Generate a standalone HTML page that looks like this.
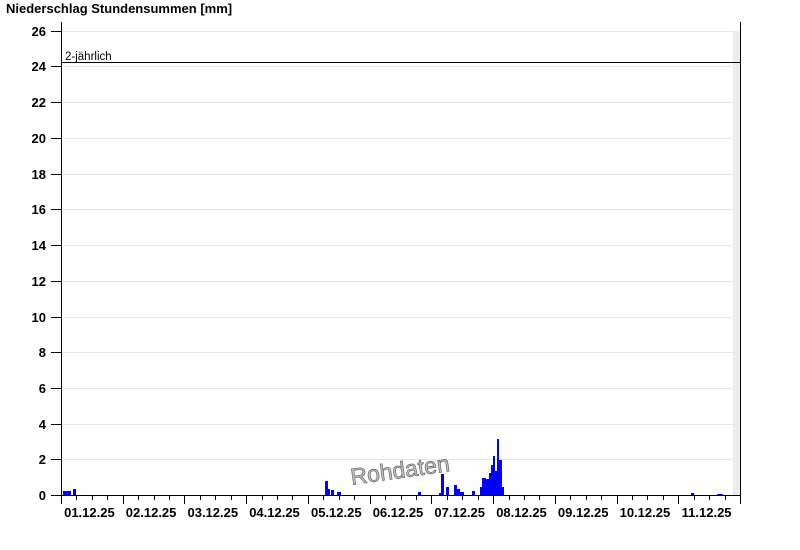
<!DOCTYPE html>
<html><head><meta charset="utf-8"><style>
html,body{margin:0;padding:0;background:#fff;}
svg{display:block;font-family:"Liberation Sans",Arial,sans-serif;}
</style></head><body>
<svg width="800" height="550" viewBox="0 0 800 550" xmlns="http://www.w3.org/2000/svg">
<text x="6" y="13" font-size="13" font-weight="bold" fill="#000">Niederschlag Stundensummen [mm]</text>
<rect x="733" y="31" width="7" height="464" fill="#ececec"/>
<g stroke="#e6e6e6" stroke-width="1">
<line x1="61" x2="733" y1="31.5" y2="31.5"/><line x1="61" x2="733" y1="66.5" y2="66.5"/>
<line x1="61" x2="733" y1="102.5" y2="102.5"/><line x1="61" x2="733" y1="138.5" y2="138.5"/>
<line x1="61" x2="733" y1="174.5" y2="174.5"/><line x1="61" x2="733" y1="209.5" y2="209.5"/>
<line x1="61" x2="733" y1="245.5" y2="245.5"/><line x1="61" x2="733" y1="281.5" y2="281.5"/>
<line x1="61" x2="733" y1="317.5" y2="317.5"/><line x1="61" x2="733" y1="352.5" y2="352.5"/>
<line x1="61" x2="733" y1="388.5" y2="388.5"/><line x1="61" x2="733" y1="424.5" y2="424.5"/>
<line x1="61" x2="733" y1="459.5" y2="459.5"/>
</g>
<g font-size="13" font-weight="bold" text-anchor="end" fill="#000">
<text x="46" y="36">26</text><text x="46" y="71">24</text><text x="46" y="107">22</text>
<text x="46" y="143">20</text><text x="46" y="179">18</text><text x="46" y="214">16</text>
<text x="46" y="250">14</text><text x="46" y="286">12</text><text x="46" y="322">10</text>
<text x="46" y="357">8</text><text x="46" y="393">6</text><text x="46" y="429">4</text>
<text x="46" y="464">2</text><text x="46" y="500">0</text>
</g>
<g stroke="#000" stroke-width="1">
<line x1="51" x2="61" y1="31.5" y2="31.5"/><line x1="51" x2="61" y1="66.5" y2="66.5"/>
<line x1="51" x2="61" y1="102.5" y2="102.5"/><line x1="51" x2="61" y1="138.5" y2="138.5"/>
<line x1="51" x2="61" y1="174.5" y2="174.5"/><line x1="51" x2="61" y1="209.5" y2="209.5"/>
<line x1="51" x2="61" y1="245.5" y2="245.5"/><line x1="51" x2="61" y1="281.5" y2="281.5"/>
<line x1="51" x2="61" y1="317.5" y2="317.5"/><line x1="51" x2="61" y1="352.5" y2="352.5"/>
<line x1="51" x2="61" y1="388.5" y2="388.5"/><line x1="51" x2="61" y1="424.5" y2="424.5"/>
<line x1="51" x2="61" y1="459.5" y2="459.5"/><line x1="51" x2="61" y1="495.5" y2="495.5"/>
</g>
<text x="65" y="60" font-size="11.5" fill="#000">2-jährlich</text>
<line x1="61" x2="740" y1="62.5" y2="62.5" stroke="#000"/>
<g fill="#0000ff">
<rect x="63" y="491" width="8" height="4"/><rect x="73" y="489" width="3" height="6"/>
<rect x="325" y="481" width="3" height="14"/><rect x="328" y="489" width="2" height="6"/>
<rect x="331" y="490" width="3" height="5"/><rect x="337" y="492" width="4" height="3"/>
<rect x="418" y="492" width="3" height="3"/>
<rect x="439" y="493" width="2" height="2"/><rect x="441" y="474" width="3" height="21"/>
<rect x="446" y="487" width="3" height="8"/><rect x="454" y="485" width="3" height="10"/>
<rect x="457" y="489" width="3" height="6"/><rect x="460" y="492" width="4" height="3"/>
<rect x="472" y="491" width="3" height="4"/><rect x="480" y="487" width="2" height="8"/>
<rect x="482" y="478" width="4" height="17"/><rect x="486" y="479" width="3" height="16"/>
<rect x="489" y="473" width="2" height="22"/><rect x="491" y="465" width="2" height="30"/>
<rect x="493" y="456" width="2" height="39"/><rect x="495" y="471" width="2" height="24"/>
<rect x="497" y="439" width="2" height="56"/><rect x="499" y="460" width="3" height="35"/>
<rect x="502" y="487" width="2" height="8"/>
<rect x="691" y="493" width="3" height="2"/><rect x="717" y="494" width="6" height="1"/>
</g>
<text x="400" y="478" font-size="23" fill="#c4c4c4" stroke="#666" stroke-width="0.7" text-anchor="middle" transform="rotate(-8 400 470)">Rohdaten</text>
<line x1="61.5" x2="61.5" y1="22" y2="495" stroke="#000"/>
<line x1="740.5" x2="740.5" y1="22" y2="495" stroke="#000"/>
<line x1="61" x2="741" y1="495.5" y2="495.5" stroke="#000"/>
<g stroke="#000" id="ticks"></g>
<g font-size="13" font-weight="bold" text-anchor="middle" fill="#000" id="lbl"></g>
<script>
var t=document.getElementById('ticks'),l=document.getElementById('lbl'),ns='http://www.w3.org/2000/svg';
var d=679/11;
for(var i=0;i<=44;i++){var x=Math.round(61+i*d/4)+0.5;var e=document.createElementNS(ns,'line');
e.setAttribute('x1',x);e.setAttribute('x2',x);e.setAttribute('y1',495);e.setAttribute('y2',i%4==0?504:500);t.appendChild(e);}
for(var k=0;k<11;k++){var s=document.createElementNS(ns,'text');s.setAttribute('x',(61+(k+0.5)*d-2.5).toFixed(1));s.setAttribute('y',517);
s.textContent=('0'+(k+1)).slice(-2)+'.12.25';l.appendChild(s);}
</script>
</svg>
</body></html>
